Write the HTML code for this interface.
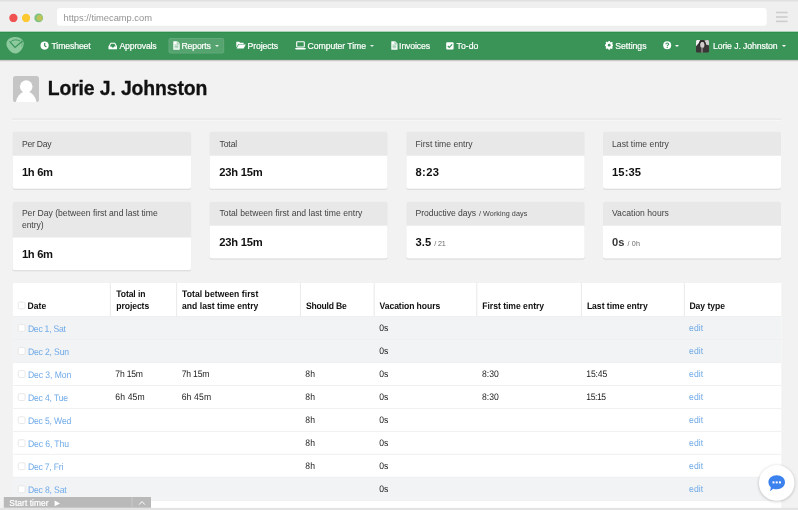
<!DOCTYPE html>
<html><head><meta charset="utf-8"><title>TimeCamp</title>
<style>
*{box-sizing:border-box;margin:0;padding:0}
html,body{width:798px;height:510px;overflow:hidden;background:#f2f2f2;font-family:"Liberation Sans",sans-serif}
.a{position:absolute}
.t{position:absolute;white-space:nowrap}
.caret{width:0;height:0;border-left:2.2px solid transparent;border-right:2.2px solid transparent;border-top:2.4px solid rgba(255,255,255,.85)}
#ava{left:12.5px;top:75.8px;width:26.7px;height:26.6px;background:#c5c5c5;border-radius:2.6px;overflow:hidden}
</style></head><body>
<svg class="a" style="left:0;top:0" width="798" height="510" viewBox="0 0 798 510">
<defs>
<linearGradient id="ns" x1="0" y1="0" x2="0" y2="1"><stop offset="0" stop-color="#000" stop-opacity=".3"/><stop offset="1" stop-color="#000" stop-opacity="0"/></linearGradient>
<filter id="cs" x="-5%" y="-10%" width="110%" height="130%"><feGaussianBlur stdDeviation="0.7"/></filter>
<filter id="chs" x="-30%" y="-30%" width="160%" height="160%"><feGaussianBlur stdDeviation="1.8"/></filter>
</defs>
<rect x="0" y="0" width="798" height="32" fill="#efefef"/>
<rect x="0" y="0" width="798" height="1.6" fill="#e1e1e1"/>
<rect x="0" y="30.8" width="798" height="1.1" fill="#f8f5f8"/>
<rect x="57" y="8.1" width="709.7" height="17.7" rx="3" fill="#fff"/>
<rect x="776" y="11.70" width="11.6" height="1.6" fill="#cdcdcd"/>
<rect x="776" y="16.20" width="11.6" height="1.6" fill="#cdcdcd"/>
<rect x="776" y="20.60" width="11.6" height="1.6" fill="#cdcdcd"/>
<circle cx="13.4" cy="17.95" r="4.15" fill="#ef5251"/>
<circle cx="26.05" cy="17.95" r="4.15" fill="#fdc830"/>
<circle cx="38.7" cy="17.9" r="4.4" fill="#80c183"/>
<circle cx="39.6" cy="17.9" r="2.9" fill="#e3c83e" opacity=".62"/>
<rect x="0" y="59.5" width="798" height="2.4" fill="url(#ns)"/>
<rect x="0" y="31.8" width="798" height="27.8" fill="#3a9458"/>
<rect x="0" y="31.8" width="798" height="0.9" fill="#2b8b46"/>
<rect x="0" y="58.7" width="798" height="0.9" fill="#358c51"/>
<rect x="168.5" y="38" width="55.7" height="15.5" rx="2" fill="#fff" fill-opacity=".14"/>
<rect x="169" y="38.5" width="54.7" height="14.5" rx="1.6" fill="none" stroke="#fff" stroke-opacity=".16" stroke-width="1" stroke-dasharray="1 1"/>
<rect x="12.4" y="118.7" width="769.1" height="1" fill="#dedede"/>
<rect x="12.4" y="119.7" width="769.1" height="1" fill="#fafafa"/>
<rect x="12.6" y="132.60" width="178.45" height="57.20" rx="2" fill="#000" opacity=".11" filter="url(#cs)"/>
<rect x="12.6" y="131.6" width="178.45" height="57.20" rx="2" fill="#fff"/>
<path d="M12.6 155.7 V133.6 Q12.6 131.6 14.6 131.6 H189.05 Q191.05 131.6 191.05 133.6 V155.7 Z" fill="#e8e8e8"/>
<rect x="209.5" y="132.60" width="178.1" height="57.20" rx="2" fill="#000" opacity=".11" filter="url(#cs)"/>
<rect x="209.5" y="131.6" width="178.1" height="57.20" rx="2" fill="#fff"/>
<path d="M209.5 155.7 V133.6 Q209.5 131.6 211.5 131.6 H385.60 Q387.60 131.6 387.60 133.6 V155.7 Z" fill="#e8e8e8"/>
<rect x="406.3" y="132.60" width="178.4" height="57.20" rx="2" fill="#000" opacity=".11" filter="url(#cs)"/>
<rect x="406.3" y="131.6" width="178.4" height="57.20" rx="2" fill="#fff"/>
<path d="M406.3 155.7 V133.6 Q406.3 131.6 408.3 131.6 H582.70 Q584.70 131.6 584.70 133.6 V155.7 Z" fill="#e8e8e8"/>
<rect x="603.0" y="132.60" width="178.0" height="57.20" rx="2" fill="#000" opacity=".11" filter="url(#cs)"/>
<rect x="603.0" y="131.6" width="178.0" height="57.20" rx="2" fill="#fff"/>
<path d="M603.0 155.7 V133.6 Q603.0 131.6 605.0 131.6 H779.00 Q781.00 131.6 781.00 133.6 V155.7 Z" fill="#e8e8e8"/>
<rect x="12.6" y="202.40" width="178.45" height="68.80" rx="2" fill="#000" opacity=".11" filter="url(#cs)"/>
<rect x="12.6" y="201.4" width="178.45" height="68.80" rx="2" fill="#fff"/>
<path d="M12.6 237.6 V203.4 Q12.6 201.4 14.6 201.4 H189.05 Q191.05 201.4 191.05 203.4 V237.6 Z" fill="#e8e8e8"/>
<rect x="209.5" y="202.40" width="178.1" height="57.10" rx="2" fill="#000" opacity=".11" filter="url(#cs)"/>
<rect x="209.5" y="201.4" width="178.1" height="57.10" rx="2" fill="#fff"/>
<path d="M209.5 225.7 V203.4 Q209.5 201.4 211.5 201.4 H385.60 Q387.60 201.4 387.60 203.4 V225.7 Z" fill="#e8e8e8"/>
<rect x="406.3" y="202.40" width="178.4" height="57.10" rx="2" fill="#000" opacity=".11" filter="url(#cs)"/>
<rect x="406.3" y="201.4" width="178.4" height="57.10" rx="2" fill="#fff"/>
<path d="M406.3 225.7 V203.4 Q406.3 201.4 408.3 201.4 H582.70 Q584.70 201.4 584.70 203.4 V225.7 Z" fill="#e8e8e8"/>
<rect x="603.0" y="202.40" width="178.0" height="57.10" rx="2" fill="#000" opacity=".11" filter="url(#cs)"/>
<rect x="603.0" y="201.4" width="178.0" height="57.10" rx="2" fill="#fff"/>
<path d="M603.0 225.7 V203.4 Q603.0 201.4 605.0 201.4 H779.00 Q781.00 201.4 781.00 203.4 V225.7 Z" fill="#e8e8e8"/>
<rect x="12.9" y="282.95" width="768.40" height="225.25" fill="#fff"/>
<rect x="12.9" y="316.45" width="768.40" height="23.05" fill="#f2f3f5"/>
<rect x="12.9" y="339.5" width="768.40" height="23.00" fill="#f2f3f5"/>
<rect x="12.9" y="477.25" width="768.40" height="23.15" fill="#f2f3f5"/>
<rect x="12.9" y="315.95" width="768.40" height="1" fill="#f0f0f0"/>
<rect x="12.9" y="339.00" width="768.40" height="1" fill="#f0f0f0"/>
<rect x="12.9" y="362.00" width="768.40" height="1" fill="#f0f0f0"/>
<rect x="12.9" y="384.95" width="768.40" height="1" fill="#f0f0f0"/>
<rect x="12.9" y="407.90" width="768.40" height="1" fill="#f0f0f0"/>
<rect x="12.9" y="430.90" width="768.40" height="1" fill="#f0f0f0"/>
<rect x="12.9" y="453.85" width="768.40" height="1" fill="#f0f0f0"/>
<rect x="12.9" y="476.75" width="768.40" height="1" fill="#f0f0f0"/>
<rect x="12.9" y="499.90" width="768.40" height="1" fill="#f0f0f0"/>
<rect x="109.80" y="282.95" width="1" height="33.50" fill="#e9e9e9"/>
<rect x="176.10" y="282.95" width="1" height="33.50" fill="#e9e9e9"/>
<rect x="299.90" y="282.95" width="1" height="33.50" fill="#e9e9e9"/>
<rect x="373.70" y="282.95" width="1" height="33.50" fill="#e9e9e9"/>
<rect x="476.30" y="282.95" width="1" height="33.50" fill="#e9e9e9"/>
<rect x="580.90" y="282.95" width="1" height="33.50" fill="#e9e9e9"/>
<rect x="683.80" y="282.95" width="1" height="33.50" fill="#e9e9e9"/>
<rect x="18.25" y="302.00" width="6.8" height="6.8" rx="1.3" fill="#fff" stroke="#e5e5e5" stroke-width="0.9"/>
<rect x="18.25" y="324.60" width="6.8" height="6.8" rx="1.3" fill="#fff" stroke="#e5e5e5" stroke-width="0.9"/>
<rect x="18.25" y="347.64" width="6.8" height="6.8" rx="1.3" fill="#fff" stroke="#e5e5e5" stroke-width="0.9"/>
<rect x="18.25" y="370.68" width="6.8" height="6.8" rx="1.3" fill="#fff" stroke="#e5e5e5" stroke-width="0.9"/>
<rect x="18.25" y="393.72" width="6.8" height="6.8" rx="1.3" fill="#fff" stroke="#e5e5e5" stroke-width="0.9"/>
<rect x="18.25" y="416.76" width="6.8" height="6.8" rx="1.3" fill="#fff" stroke="#e5e5e5" stroke-width="0.9"/>
<rect x="18.25" y="439.80" width="6.8" height="6.8" rx="1.3" fill="#fff" stroke="#e5e5e5" stroke-width="0.9"/>
<rect x="18.25" y="462.84" width="6.8" height="6.8" rx="1.3" fill="#fff" stroke="#e5e5e5" stroke-width="0.9"/>
<rect x="18.25" y="485.88" width="6.8" height="6.8" rx="1.3" fill="#fff" stroke="#e5e5e5" stroke-width="0.9"/>
<rect x="3.8" y="497" width="147.2" height="10.8" fill="#b9b9b9"/>
<rect x="131.6" y="497" width="0.9" height="10.8" fill="#cacaca"/>
<path d="M139.2 504.6 L142 501.5 L144.8 504.6" fill="none" stroke="#fff" stroke-width="1"/>
<path d="M54.6 500.5 L60 503.4 L54.6 506.3 Z" fill="#fff"/>
<rect x="0" y="507.9" width="798" height="2.1" fill="#e3e3e3"/>
<circle cx="776.7" cy="483.6" r="18" fill="#000" opacity=".22" filter="url(#chs)"/>
<circle cx="776.7" cy="482.9" r="17.85" fill="#fff"/>
<g transform="translate(767.7,474.5) scale(1.06)"><path d="M8.5 0.8 C13 0.8 16.3 3.7 16.3 7.4 C16.3 11.1 13 14 8.5 14 C7.3 14 6.2 13.8 5.2 13.4 L2.2 15.8 L3 12.2 C1.6 11 0.7 9.3 0.7 7.4 C0.7 3.7 4 0.8 8.5 0.8 Z" fill="#3b82ef"/><rect x="4.5" y="6.5" width="1.9" height="1.9" fill="#fff"/><rect x="7.55" y="6.5" width="1.9" height="1.9" fill="#fff"/><rect x="10.6" y="6.5" width="1.9" height="1.9" fill="#fff"/></g>
</svg>

<!-- logo -->
<svg class="a" style="left:5px;top:35px" width="21" height="21" viewBox="0 0 21 21">
 <path d="M9.6 2 C15.2 1.8 19 5 18.7 9 C18.4 13.2 14.6 18.4 10.6 18.4 C6.6 18.4 1.6 13.6 1.45 9.2 C1.3 5.2 4.4 2.2 9.6 2 Z" fill="#8dca9e"/>
 <path d="M4.6 6.4 L10 12.4 L17.6 5.9" fill="none" stroke="#3a9458" stroke-width="1.3"/>
 <path d="M6.2 6.4 C8 4.5 12.7 4.3 15 6" fill="none" stroke="#3a9458" stroke-width="0.9"/>
 <path d="M15.2 4.5 C17 6 17.6 9 16.6 11.5" fill="none" stroke="#3a9458" stroke-width="0.7" opacity=".7"/>
</svg>

<!-- nav icons -->
<!-- clock -->
<svg class="a" style="left:40.1px;top:41.1px" width="9.2" height="9.2" viewBox="0 0 9.2 9.2"><circle cx="4.6" cy="4.6" r="4.1" fill="#fff"/><path d="M4.7 2.1 V4.8 L6.4 5.9" fill="none" stroke="#3a9458" stroke-width="1.2"/></svg>
<!-- inbox -->
<svg class="a" style="left:107.6px;top:41.8px" width="9.6" height="8.4" viewBox="0 0 10 9"><path d="M2.6 0.8 H7.4 L9.6 4.8 V7.8 H0.4 V4.8 Z" fill="#fff"/><path d="M3.2 2 H6.8 L8.2 4.8 H6.4 L5.9 5.9 H4.1 L3.6 4.8 H1.8 Z" fill="#3a9458"/></svg>
<!-- file reports -->
<svg class="a" style="left:172.8px;top:41px" width="7" height="9" viewBox="0 0 7 9"><path d="M0.3 0.3 H4.4 L6.7 2.6 V8.7 H0.3 Z" fill="#fff"/><path d="M1.5 4 H5.5 M1.5 5.4 H5.5 M1.5 6.8 H5.5" stroke="#5aa773" stroke-width=".6"/><path d="M4.2 0.3 V2.8 H6.7" fill="none" stroke="#5aa773" stroke-width=".6"/></svg>
<!-- folder open -->
<svg class="a" style="left:235.6px;top:41.3px" width="10" height="8" viewBox="0 0 10 8"><path d="M0.3 0.8 H3.2 L4 1.8 H7.6 V3 H2.4 L0.3 6.6 Z" fill="#fff"/><path d="M2.8 3.6 H9.8 L7.6 7.4 H0.6 Z" fill="#fff"/></svg>
<!-- laptop -->
<svg class="a" style="left:294.8px;top:41.4px" width="11" height="9.4" viewBox="0 0 11 9"><rect x="1.7" y="0.6" width="7.6" height="5.2" rx=".6" fill="none" stroke="#fff" stroke-width="1.1"/><path d="M0.2 6.8 H10.8 V7.4 Q10.8 8.2 10 8.2 H1 Q0.2 8.2 0.2 7.4 Z" fill="#fff"/></svg>
<!-- file invoices -->
<svg class="a" style="left:390.6px;top:41px" width="7" height="9" viewBox="0 0 7 9"><path d="M0.3 0.3 H4.2 L6.5 2.6 V8.7 H0.3 Z" fill="#fff"/><path d="M1.5 4 H5.3 M1.5 5.4 H5.3 M1.5 6.8 H5.3" stroke="#5aa773" stroke-width=".6"/><path d="M4 0.3 V2.8 H6.5" fill="none" stroke="#5aa773" stroke-width=".6"/></svg>
<!-- check square -->
<svg class="a" style="left:446.2px;top:41.6px" width="8" height="8" viewBox="0 0 8 8"><rect x="0.2" y="0.2" width="7.4" height="7.4" rx="1" fill="#fff"/><path d="M1.8 4 L3.3 5.5 L6.2 2.4" fill="none" stroke="#3a9458" stroke-width="1.1"/></svg>
<!-- gear -->
<svg class="a" style="left:604.8px;top:41.4px" width="8.4" height="8.4" viewBox="0 0 16 16"><path fill="#fff" d="M6.6 0h2.8l.4 2.1 1.3.6 1.8-1.2 2 2-1.2 1.8.6 1.3 2.1.4v2.8l-2.1.4-.6 1.3 1.2 1.8-2 2-1.8-1.2-1.3.6-.4 2.1H6.6l-.4-2.1-1.3-.6-1.8 1.2-2-2 1.2-1.8-.6-1.3L-.4 9.4V6.6l2.1-.4.6-1.3L1.1 3.1l2-2 1.8 1.2 1.3-.6z"/><circle cx="8" cy="8" r="2.6" fill="#3a9458"/></svg>
<!-- question -->
<svg class="a" style="left:663.3px;top:41.4px" width="8.4" height="8.4" viewBox="0 0 16 16"><circle cx="8" cy="8" r="7.6" fill="#fff"/><path d="M5.4 6.2 C5.4 3.2 10.6 3.2 10.6 6.1 C10.6 8 8 7.9 8 9.8" fill="none" stroke="#3a9458" stroke-width="2"/><circle cx="8" cy="12.2" r="1.2" fill="#3a9458"/></svg>
<!-- carets -->
<div class="a caret" style="left:215px;top:44.8px"></div>
<div class="a caret" style="left:369.7px;top:44.8px"></div>
<div class="a caret" style="left:674.8px;top:44.8px;border-top-color:#fff"></div>
<div class="a caret" style="left:781.6px;top:44.8px;border-top-color:#fff"></div>
<!-- user avatar (photo) -->
<svg class="a" style="left:696px;top:40.1px" width="13" height="12.7" viewBox="0 0 13 12.7">
 <defs><filter id="bl" x="-20%" y="-20%" width="140%" height="140%"><feGaussianBlur stdDeviation="0.55"/></filter><clipPath id="cp"><rect width="13" height="12.7" rx="1.4"/></clipPath></defs>
 <g clip-path="url(#cp)"><rect width="13" height="12.7" fill="#3a3637"/>
 <g filter="url(#bl)">
  <path d="M-1 -1 H4.6 L2.8 3 L-1 7.5 Z" fill="#f2f2f2"/>
  <path d="M8.4 0.4 L13.5 -0.5 L13.5 5.6 L10 4.6 Z" fill="#cfcfcf"/>
  <ellipse cx="6.3" cy="4.8" rx="2.1" ry="3.3" fill="#d2cdcb"/>
  <rect x="5.1" y="7.6" width="1.8" height="5.5" fill="#807b78"/>
  <path d="M3 3 C4 0.2 8 0 9.6 2.6 L9.9 6.5 L8.6 3.4 C7.6 1.6 5 1.6 4.2 3.2 L3.3 6.8 Z" fill="#2a2627"/>
 </g></g>
</svg>

<!-- page avatar -->
<div class="a" id="ava">
 <svg class="a" style="left:0;top:0" width="26.7" height="26.6" viewBox="0 0 26.7 26.6"><circle cx="13.2" cy="10.6" r="6.3" fill="#fff"/><ellipse cx="13.2" cy="29.6" rx="10.6" ry="14.2" fill="#fff"/></svg>
</div>

<div class="a" id="txt" style="left:0;top:0;width:798px;height:510px;will-change:transform"><span class="t" id="t0" style="left:63.5px;top:11px;font-size:9.4px;line-height:13px;font-weight:400;color:#939393;letter-spacing:-0.03px;">https://timecamp.com</span>
<span class="t" id="t1" style="left:51.5px;top:40px;font-size:8.7px;line-height:12px;font-weight:400;color:#fff;letter-spacing:-0.126px;-webkit-text-stroke:0.2px #fff;">Timesheet</span>
<span class="t" id="t2" style="left:119.5px;top:40px;font-size:8.7px;line-height:12px;font-weight:400;color:#fff;letter-spacing:-0.182px;-webkit-text-stroke:0.2px #fff;">Approvals</span>
<span class="t" id="t3" style="left:181.5px;top:40px;font-size:8.7px;line-height:12px;font-weight:400;color:#fff;letter-spacing:-0.167px;-webkit-text-stroke:0.2px #fff;">Reports</span>
<span class="t" id="t4" style="left:247.5px;top:40px;font-size:8.7px;line-height:12px;font-weight:400;color:#fff;letter-spacing:-0.111px;-webkit-text-stroke:0.2px #fff;">Projects</span>
<span class="t" id="t5" style="left:307.6px;top:40px;font-size:8.7px;line-height:12px;font-weight:400;color:#fff;letter-spacing:-0.076px;-webkit-text-stroke:0.2px #fff;">Computer Time</span>
<span class="t" id="t6" style="left:399.1px;top:40px;font-size:8.7px;line-height:12px;font-weight:400;color:#fff;letter-spacing:-0.122px;-webkit-text-stroke:0.2px #fff;">Invoices</span>
<span class="t" id="t7" style="left:456.5px;top:40px;font-size:8.7px;line-height:12px;font-weight:400;color:#fff;letter-spacing:0.053px;-webkit-text-stroke:0.2px #fff;">To-do</span>
<span class="t" id="t8" style="left:615.3px;top:40px;font-size:8.7px;line-height:12px;font-weight:400;color:#fff;letter-spacing:-0.024px;-webkit-text-stroke:0.2px #fff;">Settings</span>
<span class="t" id="t9" style="left:713px;top:40px;font-size:8.7px;line-height:12px;font-weight:400;color:#fff;letter-spacing:-0.092px;-webkit-text-stroke:0.2px #fff;">Lorie J. Johnston</span>
<span class="t" id="t10" style="left:47.7px;top:75px;font-size:19.4px;line-height:26px;font-weight:700;color:#111;letter-spacing:-0.124px;-webkit-text-stroke:0.3px #111;">Lorie J. Johnston</span>
<span class="t" id="t11" style="left:21.9px;top:138px;font-size:8.6px;line-height:12px;font-weight:400;color:#424242;letter-spacing:-0.221px;">Per Day</span>
<span class="t" id="t12" style="left:21.9px;top:165px;font-size:11.2px;line-height:15px;font-weight:700;color:#111;letter-spacing:-0.309px;">1h 6m</span>
<span class="t" id="t13" style="left:219.5px;top:138px;font-size:8.6px;line-height:12px;font-weight:400;color:#424242;letter-spacing:-0.111px;">Total</span>
<span class="t" id="t14" style="left:219.3px;top:165px;font-size:11.2px;line-height:15px;font-weight:700;color:#111;letter-spacing:-0.24px;">23h 15m</span>
<span class="t" id="t15" style="left:415.5px;top:138px;font-size:8.6px;line-height:12px;font-weight:400;color:#424242;letter-spacing:0.023px;">First time entry</span>
<span class="t" id="t16" style="left:415.5px;top:165px;font-size:11.2px;line-height:15px;font-weight:700;color:#111;letter-spacing:0.348px;">8:23</span>
<span class="t" id="t17" style="left:612px;top:138px;font-size:8.6px;line-height:12px;font-weight:400;color:#424242;letter-spacing:0.036px;">Last time entry</span>
<span class="t" id="t18" style="left:612px;top:165px;font-size:11.2px;line-height:15px;font-weight:700;color:#111;letter-spacing:0.095px;">15:35</span>
<span class="t" id="t19" style="left:21.9px;top:207px;font-size:8.6px;line-height:12px;font-weight:400;color:#424242;letter-spacing:-0.009px;">Per Day (between first and last time</span>
<span class="t" id="t20" style="left:21.9px;top:219px;font-size:8.6px;line-height:12px;font-weight:400;color:#424242;letter-spacing:-0.045px;">entry)</span>
<span class="t" id="t21" style="left:21.9px;top:247px;font-size:11.2px;line-height:15px;font-weight:700;color:#111;letter-spacing:-0.309px;">1h 6m</span>
<span class="t" id="t22" style="left:219.5px;top:207px;font-size:8.6px;line-height:12px;font-weight:400;color:#424242;letter-spacing:0.026px;">Total between first and last time entry</span>
<span class="t" id="t23" style="left:219.3px;top:235px;font-size:11.2px;line-height:15px;font-weight:700;color:#111;letter-spacing:-0.24px;">23h 15m</span>
<span class="t" id="t24" style="left:415.5px;top:207px;font-size:8.6px;line-height:12px;font-weight:400;color:#424242;letter-spacing:-0.044px;">Productive days</span>
<span class="t" id="t25" style="left:479px;top:209px;font-size:7.2px;line-height:10px;font-weight:400;color:#424242;letter-spacing:0.064px;">/ Working days</span>
<span class="t" id="t26" style="left:415.5px;top:235px;font-size:11.2px;line-height:15px;font-weight:700;color:#111;letter-spacing:0.079px;">3.5</span>
<span class="t" id="t27" style="left:434.3px;top:239px;font-size:7.2px;line-height:10px;font-weight:400;color:#6a6a6a;letter-spacing:-0.175px;">/ 21</span>
<span class="t" id="t28" style="left:612px;top:207px;font-size:8.6px;line-height:12px;font-weight:400;color:#424242;letter-spacing:0.014px;">Vacation hours</span>
<span class="t" id="t29" style="left:612px;top:235px;font-size:11.2px;line-height:15px;font-weight:700;color:#3a3a3a;letter-spacing:0.073px;">0s</span>
<span class="t" id="t30" style="left:627.6px;top:239px;font-size:7.2px;line-height:10px;font-weight:400;color:#6a6a6a;letter-spacing:0.125px;">/ 0h</span>
<span class="t" id="t31" style="left:27.5px;top:300px;font-size:8.6px;line-height:12px;font-weight:700;color:#111;letter-spacing:0.04px;text-rendering:geometricPrecision;transform:scaleY(1.1);transform-origin:0 50%;">Date</span>
<span class="t" id="t32" style="left:116.3px;top:288px;font-size:8.6px;line-height:12px;font-weight:700;color:#111;letter-spacing:-0.115px;text-rendering:geometricPrecision;transform:scaleY(1.1);transform-origin:0 50%;">Total in</span>
<span class="t" id="t33" style="left:116.3px;top:300px;font-size:8.6px;line-height:12px;font-weight:700;color:#111;letter-spacing:-0.08px;text-rendering:geometricPrecision;transform:scaleY(1.1);transform-origin:0 50%;">projects</span>
<span class="t" id="t34" style="left:182px;top:288px;font-size:8.6px;line-height:12px;font-weight:700;color:#111;letter-spacing:0.053px;text-rendering:geometricPrecision;transform:scaleY(1.1);transform-origin:0 50%;">Total between first</span>
<span class="t" id="t35" style="left:182px;top:300px;font-size:8.6px;line-height:12px;font-weight:700;color:#111;letter-spacing:0.019px;text-rendering:geometricPrecision;transform:scaleY(1.1);transform-origin:0 50%;">and last time entry</span>
<span class="t" id="t36" style="left:305.9px;top:300px;font-size:8.6px;line-height:12px;font-weight:700;color:#111;letter-spacing:-0.211px;text-rendering:geometricPrecision;transform:scaleY(1.1);transform-origin:0 50%;">Should Be</span>
<span class="t" id="t37" style="left:379.6px;top:300px;font-size:8.6px;line-height:12px;font-weight:700;color:#111;letter-spacing:-0.079px;text-rendering:geometricPrecision;transform:scaleY(1.1);transform-origin:0 50%;">Vacation hours</span>
<span class="t" id="t38" style="left:482.2px;top:300px;font-size:8.6px;line-height:12px;font-weight:700;color:#111;letter-spacing:-0.012px;text-rendering:geometricPrecision;transform:scaleY(1.1);transform-origin:0 50%;">First time entry</span>
<span class="t" id="t39" style="left:586.9px;top:300px;font-size:8.6px;line-height:12px;font-weight:700;color:#111;letter-spacing:-0.023px;text-rendering:geometricPrecision;transform:scaleY(1.1);transform-origin:0 50%;">Last time entry</span>
<span class="t" id="t40" style="left:689.4px;top:300px;font-size:8.6px;line-height:12px;font-weight:700;color:#111;letter-spacing:-0.016px;text-rendering:geometricPrecision;transform:scaleY(1.1);transform-origin:0 50%;">Day type</span>
<span class="t" id="t41" style="left:27.9px;top:323px;font-size:8.6px;line-height:12px;font-weight:400;color:#6faae8;letter-spacing:-0.243px;text-rendering:geometricPrecision;transform:scaleY(1.1);transform-origin:0 50%;">Dec 1, Sat</span>
<span class="t" id="t42" style="left:379.2px;top:322px;font-size:8.6px;line-height:12px;font-weight:400;color:#222;letter-spacing:-0.039px;text-rendering:geometricPrecision;transform:scaleY(1.1);transform-origin:0 50%;">0s</span>
<span class="t" id="t43" style="left:689.1px;top:322px;font-size:8.6px;line-height:12px;font-weight:400;color:#6faae8;letter-spacing:0.035px;text-rendering:geometricPrecision;transform:scaleY(1.1);transform-origin:0 50%;">edit</span>
<span class="t" id="t44" style="left:27.9px;top:346px;font-size:8.6px;line-height:12px;font-weight:400;color:#6faae8;letter-spacing:-0.152px;text-rendering:geometricPrecision;transform:scaleY(1.1);transform-origin:0 50%;">Dec 2, Sun</span>
<span class="t" id="t45" style="left:379.2px;top:345px;font-size:8.6px;line-height:12px;font-weight:400;color:#222;letter-spacing:-0.039px;text-rendering:geometricPrecision;transform:scaleY(1.1);transform-origin:0 50%;">0s</span>
<span class="t" id="t46" style="left:689.1px;top:345px;font-size:8.6px;line-height:12px;font-weight:400;color:#6faae8;letter-spacing:0.035px;text-rendering:geometricPrecision;transform:scaleY(1.1);transform-origin:0 50%;">edit</span>
<span class="t" id="t47" style="left:27.9px;top:369px;font-size:8.6px;line-height:12px;font-weight:400;color:#6faae8;letter-spacing:-0.065px;text-rendering:geometricPrecision;transform:scaleY(1.1);transform-origin:0 50%;">Dec 3, Mon</span>
<span class="t" id="t48" style="left:379.2px;top:368px;font-size:8.6px;line-height:12px;font-weight:400;color:#222;letter-spacing:-0.039px;text-rendering:geometricPrecision;transform:scaleY(1.1);transform-origin:0 50%;">0s</span>
<span class="t" id="t49" style="left:689.1px;top:368px;font-size:8.6px;line-height:12px;font-weight:400;color:#6faae8;letter-spacing:0.035px;text-rendering:geometricPrecision;transform:scaleY(1.1);transform-origin:0 50%;">edit</span>
<span class="t" id="t50" style="left:115.3px;top:368px;font-size:8.6px;line-height:12px;font-weight:400;color:#222;letter-spacing:-0.195px;text-rendering:geometricPrecision;transform:scaleY(1.1);transform-origin:0 50%;">7h 15m</span>
<span class="t" id="t51" style="left:181.7px;top:368px;font-size:8.6px;line-height:12px;font-weight:400;color:#222;letter-spacing:-0.195px;text-rendering:geometricPrecision;transform:scaleY(1.1);transform-origin:0 50%;">7h 15m</span>
<span class="t" id="t52" style="left:305.2px;top:368px;font-size:8.6px;line-height:12px;font-weight:400;color:#222;letter-spacing:0.169px;text-rendering:geometricPrecision;transform:scaleY(1.1);transform-origin:0 50%;">8h</span>
<span class="t" id="t53" style="left:481.9px;top:368px;font-size:8.6px;line-height:12px;font-weight:400;color:#222;letter-spacing:0.041px;text-rendering:geometricPrecision;transform:scaleY(1.1);transform-origin:0 50%;">8:30</span>
<span class="t" id="t54" style="left:586.3px;top:368px;font-size:8.6px;line-height:12px;font-weight:400;color:#222;letter-spacing:-0.123px;text-rendering:geometricPrecision;transform:scaleY(1.1);transform-origin:0 50%;">15:45</span>
<span class="t" id="t55" style="left:27.9px;top:392px;font-size:8.6px;line-height:12px;font-weight:400;color:#6faae8;letter-spacing:-0.146px;text-rendering:geometricPrecision;transform:scaleY(1.1);transform-origin:0 50%;">Dec 4, Tue</span>
<span class="t" id="t56" style="left:379.2px;top:391px;font-size:8.6px;line-height:12px;font-weight:400;color:#222;letter-spacing:-0.039px;text-rendering:geometricPrecision;transform:scaleY(1.1);transform-origin:0 50%;">0s</span>
<span class="t" id="t57" style="left:689.1px;top:391px;font-size:8.6px;line-height:12px;font-weight:400;color:#6faae8;letter-spacing:0.035px;text-rendering:geometricPrecision;transform:scaleY(1.1);transform-origin:0 50%;">edit</span>
<span class="t" id="t58" style="left:115.3px;top:391px;font-size:8.6px;line-height:12px;font-weight:400;color:#222;letter-spacing:0.138px;text-rendering:geometricPrecision;transform:scaleY(1.1);transform-origin:0 50%;">6h 45m</span>
<span class="t" id="t59" style="left:181.7px;top:391px;font-size:8.6px;line-height:12px;font-weight:400;color:#222;letter-spacing:0.138px;text-rendering:geometricPrecision;transform:scaleY(1.1);transform-origin:0 50%;">6h 45m</span>
<span class="t" id="t60" style="left:305.2px;top:391px;font-size:8.6px;line-height:12px;font-weight:400;color:#222;letter-spacing:0.169px;text-rendering:geometricPrecision;transform:scaleY(1.1);transform-origin:0 50%;">8h</span>
<span class="t" id="t61" style="left:481.9px;top:391px;font-size:8.6px;line-height:12px;font-weight:400;color:#222;letter-spacing:0.041px;text-rendering:geometricPrecision;transform:scaleY(1.1);transform-origin:0 50%;">8:30</span>
<span class="t" id="t62" style="left:586.3px;top:391px;font-size:8.6px;line-height:12px;font-weight:400;color:#222;letter-spacing:-0.423px;text-rendering:geometricPrecision;transform:scaleY(1.1);transform-origin:0 50%;">15:15</span>
<span class="t" id="t63" style="left:27.9px;top:415px;font-size:8.6px;line-height:12px;font-weight:400;color:#6faae8;letter-spacing:-0.145px;text-rendering:geometricPrecision;transform:scaleY(1.1);transform-origin:0 50%;">Dec 5, Wed</span>
<span class="t" id="t64" style="left:379.2px;top:414px;font-size:8.6px;line-height:12px;font-weight:400;color:#222;letter-spacing:-0.039px;text-rendering:geometricPrecision;transform:scaleY(1.1);transform-origin:0 50%;">0s</span>
<span class="t" id="t65" style="left:689.1px;top:414px;font-size:8.6px;line-height:12px;font-weight:400;color:#6faae8;letter-spacing:0.035px;text-rendering:geometricPrecision;transform:scaleY(1.1);transform-origin:0 50%;">edit</span>
<span class="t" id="t66" style="left:305.2px;top:414px;font-size:8.6px;line-height:12px;font-weight:400;color:#222;letter-spacing:0.169px;text-rendering:geometricPrecision;transform:scaleY(1.1);transform-origin:0 50%;">8h</span>
<span class="t" id="t67" style="left:27.9px;top:438px;font-size:8.6px;line-height:12px;font-weight:400;color:#6faae8;letter-spacing:-0.089px;text-rendering:geometricPrecision;transform:scaleY(1.1);transform-origin:0 50%;">Dec 6, Thu</span>
<span class="t" id="t68" style="left:379.2px;top:437px;font-size:8.6px;line-height:12px;font-weight:400;color:#222;letter-spacing:-0.039px;text-rendering:geometricPrecision;transform:scaleY(1.1);transform-origin:0 50%;">0s</span>
<span class="t" id="t69" style="left:689.1px;top:437px;font-size:8.6px;line-height:12px;font-weight:400;color:#6faae8;letter-spacing:0.035px;text-rendering:geometricPrecision;transform:scaleY(1.1);transform-origin:0 50%;">edit</span>
<span class="t" id="t70" style="left:305.2px;top:437px;font-size:8.6px;line-height:12px;font-weight:400;color:#222;letter-spacing:0.169px;text-rendering:geometricPrecision;transform:scaleY(1.1);transform-origin:0 50%;">8h</span>
<span class="t" id="t71" style="left:27.9px;top:461px;font-size:8.6px;line-height:12px;font-weight:400;color:#6faae8;letter-spacing:-0.205px;text-rendering:geometricPrecision;transform:scaleY(1.1);transform-origin:0 50%;">Dec 7, Fri</span>
<span class="t" id="t72" style="left:379.2px;top:460px;font-size:8.6px;line-height:12px;font-weight:400;color:#222;letter-spacing:-0.039px;text-rendering:geometricPrecision;transform:scaleY(1.1);transform-origin:0 50%;">0s</span>
<span class="t" id="t73" style="left:689.1px;top:460px;font-size:8.6px;line-height:12px;font-weight:400;color:#6faae8;letter-spacing:0.035px;text-rendering:geometricPrecision;transform:scaleY(1.1);transform-origin:0 50%;">edit</span>
<span class="t" id="t74" style="left:305.2px;top:460px;font-size:8.6px;line-height:12px;font-weight:400;color:#222;letter-spacing:0.169px;text-rendering:geometricPrecision;transform:scaleY(1.1);transform-origin:0 50%;">8h</span>
<span class="t" id="t75" style="left:27.9px;top:484px;font-size:8.6px;line-height:12px;font-weight:400;color:#6faae8;letter-spacing:-0.152px;text-rendering:geometricPrecision;transform:scaleY(1.1);transform-origin:0 50%;">Dec 8, Sat</span>
<span class="t" id="t76" style="left:379.2px;top:483px;font-size:8.6px;line-height:12px;font-weight:400;color:#222;letter-spacing:-0.039px;text-rendering:geometricPrecision;transform:scaleY(1.1);transform-origin:0 50%;">0s</span>
<span class="t" id="t77" style="left:689.1px;top:483px;font-size:8.6px;line-height:12px;font-weight:400;color:#6faae8;letter-spacing:0.035px;text-rendering:geometricPrecision;transform:scaleY(1.1);transform-origin:0 50%;">edit</span>
<span class="t" id="t78" style="left:9.3px;top:498px;font-size:8.4px;line-height:11px;font-weight:400;color:#fff;letter-spacing:0.061px;-webkit-text-stroke:0.2px #fff;">Start timer</span></div>
</body></html>
